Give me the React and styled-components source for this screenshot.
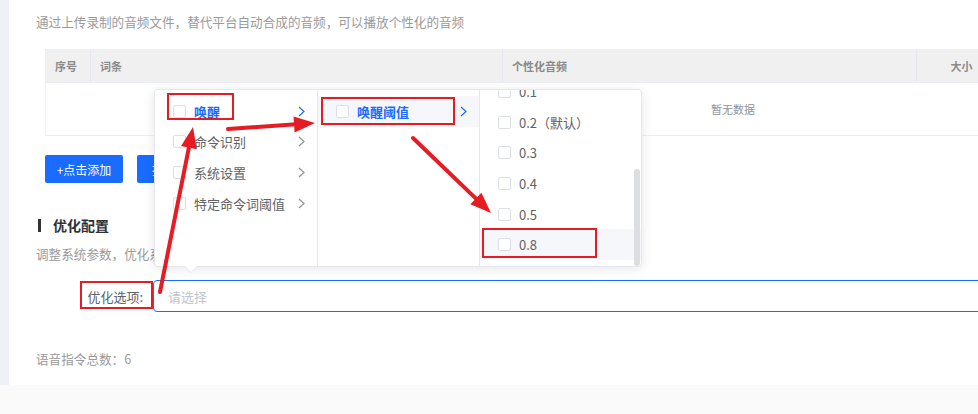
import React, { useLayoutEffect, useRef } from 'react';
import styled, { createGlobalStyle } from 'styled-components';

const Global = createGlobalStyle`
  html, body { margin: 0; padding: 0; background: #fafafa; overflow: hidden; }
  body { font-family: "Noto Sans CJK SC", "Noto Sans", sans-serif; }
  *, *::before, *::after { box-sizing: border-box; }
`;

const Page = styled.div`
  position: relative;
  width: 978px;
  height: 414px;
  overflow: hidden;
  background: #fafafa;
`;

const Shell = styled.div`
  display: flex;
  width: 1440px;
  height: 385px;
`;

const Strip = styled.div`
  flex: none;
  width: 9px;
  background: #f0f1f6;
`;

const Panel = styled.div`
  flex: 1;
  background: #fff;
  padding: 13px 0 0 27px;
  display: flex;
  flex-direction: column;
`;

const Muted = styled.p`
  margin: ${p => p.$mt || 0}px 0 0;
  font-size: 12.6px;
  line-height: 18px;
  color: #9a9a9a;
`;

const Table = styled.div`
  margin: 18px 0 0 9px;
  width: 1376px;
  border: 1px solid #ebeef5;
`;

const HeadRow = styled.div`
  display: grid;
  grid-template-columns: 45px 412px 414px 90px 1fr;
  height: 33px;
  background: #f0f0f0;
  border-bottom: 1px solid #ebeef5;
`;

const HeadCell = styled.div`
  display: flex;
  align-items: center;
  justify-content: ${p => (p.$center ? 'center' : 'flex-start')};
  padding: 0 ${p => (p.$center ? 0 : 9)}px;
  font-size: 11px;
  font-weight: 700;
  color: #8a8a8a;
  border-right: 1px solid #e6e8ef;
  &:last-child { border-right: none; }
`;

const Empty = styled.div`
  height: 52px;
  display: flex;
  align-items: center;
  justify-content: center;
  font-size: 11px;
  color: #909399;
`;

const Buttons = styled.div`
  display: flex;
  gap: 14px;
  margin: 19px 0 0 9px;
`;

const Button = styled.button`
  width: 78px;
  height: 28px;
  border: none;
  border-radius: 2px;
  background: #1a6cff;
  color: #fff;
  font-family: inherit;
  font-size: 12px;
  padding: 0;
`;

const Heading = styled.h3`
  display: flex;
  align-items: center;
  gap: 12px;
  margin: 33px 0 0;
  padding-left: 2px;
  height: 18px;
  font-size: 14px;
  font-weight: 700;
  color: #303133;
  &::before {
    content: '';
    width: 3px;
    height: 13px;
    background: #333;
  }
`;

const FormRow = styled.div`
  display: flex;
  align-items: center;
  margin-top: 17px;
`;

const Label = styled.label`
  width: 107px;
  margin-right: 10px;
  text-align: right;
  font-size: 13px;
  color: #606266;
`;

const Select = styled.div`
  flex: 1;
  height: 32px;
  border: 1px solid #1a6cff;
  border-radius: 4px;
  display: flex;
  align-items: center;
  padding-left: 14px;
  font-size: 13px;
  color: #c0c4cc;
`;

const Popup = styled.div`
  position: absolute;
  left: 154px;
  top: 89px;
  width: 488px;
  height: 178px;
  display: flex;
  background: #fff;
  border: 1px solid #e4e7ed;
  border-radius: 4px;
  box-shadow: 0 2px 12px rgba(0, 0, 0, 0.1);
  z-index: 10;
  &::after {
    content: '';
    position: absolute;
    left: 30px;
    bottom: -6px;
    border-left: 6px solid transparent;
    border-right: 6px solid transparent;
    border-top: 6px solid #fff;
    filter: drop-shadow(0 1px 0 #e4e7ed);
  }
`;

const Column = styled.div`
  position: relative;
  width: ${p => p.$w}px;
  height: 100%;
  padding: 6px 0;
  overflow: hidden;
  border-right: ${p => (p.$last ? 'none' : '1px solid #e4e7ed')};
`;

const Item = styled.div`
  display: flex;
  align-items: center;
  gap: 8px;
  height: 30.6px;
  padding: 0 12px 0 18px;
  font-size: 13px;
  color: ${p => (p.$active ? '#1a6cff' : '#606266')};
  font-weight: ${p => (p.$active ? 700 : 400)};
  background: ${p => (p.$hover ? '#f5f7fa' : 'transparent')};
  white-space: nowrap;
`;

const Box = styled.span`
  flex: none;
  width: 13px;
  height: 13px;
  border: 1px solid #dcdfe6;
  border-radius: 2px;
  background: #fff;
`;

const Chevron = styled.svg`
  margin-left: auto;
  flex: none;
`;

const Thumb = styled.div`
  position: absolute;
  right: 1px;
  top: 79px;
  width: 6px;
  height: 97px;
  border-radius: 3px;
  background: #dddee1;
`;

const Marks = styled.svg`
  position: absolute;
  left: 0;
  top: 0;
  z-index: 20;
  pointer-events: none;
`;

function Arrow({ x1, y1, x2, y2 }) {
  const dx = x2 - x1;
  const dy = y2 - y1;
  const len = Math.hypot(dx, dy);
  const ux = dx / len;
  const uy = dy / len;
  const hl = 21;
  const hw = 8;
  const bx = x2 - ux * hl;
  const by = y2 - uy * hl;
  const px = -uy;
  const py = ux;
  const pts = `${x2},${y2} ${bx + px * hw},${by + py * hw} ${bx - px * hw},${by - py * hw}`;
  return (
    <g>
      <line x1={x1} y1={y1} x2={bx + ux * 2} y2={by + uy * 2} stroke="#e51c23" strokeWidth="4" strokeLinecap="round" />
      <polygon points={pts} fill="#e51c23" />
    </g>
  );
}

function Caret({ active }) {
  return (
    <Chevron width="7" height="11" viewBox="0 0 7 11">
      <polyline points="1,1 6,5.5 1,10" fill="none" stroke={active ? '#1a6cff' : '#909399'} strokeWidth="1.2" />
    </Chevron>
  );
}

const level1 = ['唤醒', '命令识别', '系统设置', '特定命令词阈值'];
const level3 = ['0.01', '0.02', '0.03', '0.05', '0.1', '0.2（默认）', '0.3', '0.4', '0.5', '0.8'];

export default function App() {
  const listRef = useRef(null);
  useLayoutEffect(() => {
    const el = listRef.current;
    if (el) el.scrollTop = el.scrollHeight - el.clientHeight;
  }, []);

  return (
    <Page>
      <Global />
      <Shell>
        <Strip />
        <Panel>
          <Muted>通过上传录制的音频文件，替代平台自动合成的音频，可以播放个性化的音频</Muted>
          <Table>
            <HeadRow>
              <HeadCell>序号</HeadCell>
              <HeadCell>词条</HeadCell>
              <HeadCell>个性化音频</HeadCell>
              <HeadCell $center>大小</HeadCell>
              <HeadCell />
            </HeadRow>
            <Empty>暂无数据</Empty>
          </Table>
          <Buttons>
            <Button>+点击添加</Button>
            <Button>批量上传</Button>
          </Buttons>
          <Heading>优化配置</Heading>
          <Muted $mt={11}>调整系统参数，优化系统识别效果</Muted>
          <FormRow>
            <Label>优化选项:</Label>
            <Select>请选择</Select>
          </FormRow>
          <Muted $mt={38}>语音指令总数：6</Muted>
        </Panel>
      </Shell>

      <Popup>
        <Column $w={163}>
          {level1.map((t, i) => (
            <Item key={t} $active={i === 0}>
              <Box />
              {t}
              <Caret active={i === 0} />
            </Item>
          ))}
        </Column>
        <Column $w={162}>
          <Item $active $hover>
            <Box />
            唤醒阈值
            <Caret active />
          </Item>
        </Column>
        <Column $w={161} $last ref={listRef}>
          {level3.map((t, i) => (
            <Item key={t} $hover={i === level3.length - 1}>
              <Box />
              {t}
            </Item>
          ))}
        </Column>
        <Thumb />
      </Popup>

      <Marks width="978" height="414" viewBox="0 0 978 414">
        <g fill="none" stroke="#e51c23" strokeWidth="2">
          <rect x="168" y="94" width="65" height="25" />
          <rect x="322" y="98" width="132" height="26" />
          <rect x="483" y="229" width="113" height="28" />
          <rect x="81" y="282" width="71" height="26" />
        </g>
        <Arrow x1={160} y1={292} x2={193} y2={127} />
        <Arrow x1={228} y1={129} x2={315} y2={123} />
        <Arrow x1={413} y1={138} x2={491} y2={213} />
      </Marks>
    </Page>
  );
}
